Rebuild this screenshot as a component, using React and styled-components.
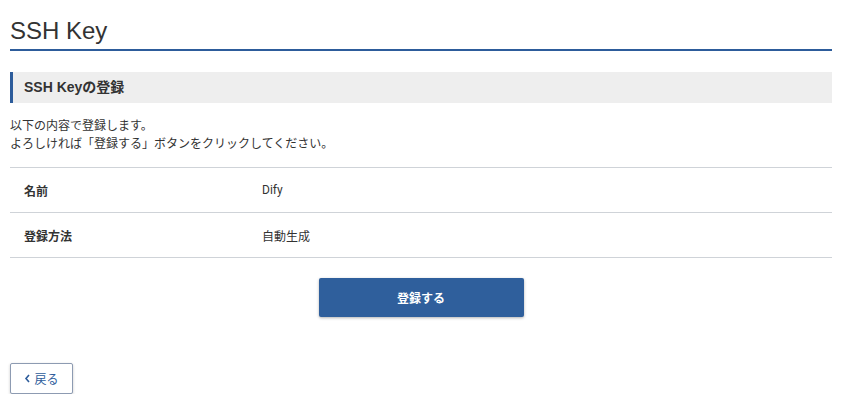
import React from "react";
import styled, { createGlobalStyle } from "styled-components";

const GlobalStyle = createGlobalStyle`
  body {
    margin: 0;
    background: #fff;
    font-family: Roboto, "Noto Sans CJK JP", sans-serif;
    color: #333;
  }
`;

const Page = styled.div`
  padding: 14px 12px 0 10px;
`;

const Title = styled.h1`
  margin: 0;
  font-family: "Liberation Sans", "Noto Sans CJK JP", sans-serif;
  font-size: 24px;
  font-weight: 400;
  line-height: 34px;
  color: #333;
  padding-bottom: 1px;
  border-bottom: 2px solid #2d5c9b;
`;

const SectionHeader = styled.h2`
  margin: 21px 0 0;
  background: #eeeeee;
  border-left: 3px solid #2d5c9b;
  font-family: "Liberation Sans", "Noto Sans CJK JP", sans-serif;
  font-size: 14px;
  font-weight: 700;
  line-height: 31px;
  padding-left: 11px;
  color: #333;
`;

const Lead = styled.p`
  margin: 14px 0 0;
  font-size: 12px;
  line-height: 18px;
  color: #333;
`;

const Table = styled.div`
  margin-top: 14px;
  border-top: 1px solid #cfd3d8;
`;

const Row = styled.div`
  display: grid;
  grid-template-columns: 252px 1fr;
  height: 44px;
  align-items: center;
  border-bottom: 1px solid #cfd3d8;
  font-size: 12px;
`;

const Label = styled.div`
  font-weight: 700;
  padding-left: 14px;
`;

const Value = styled.div``;

const Actions = styled.div`
  display: flex;
  justify-content: center;
  margin-top: 20px;
`;

const PrimaryButton = styled.button`
  width: 205px;
  height: 39px;
  border: none;
  border-radius: 2px;
  background: #2f5f9c;
  color: #fff;
  font-family: inherit;
  font-size: 12px;
  font-weight: 700;
  box-shadow: 0 1px 3px rgba(0, 0, 0, 0.3);
`;

const BackButton = styled.button`
  margin-top: 46px;
  display: flex;
  align-items: center;
  gap: 3px;
  width: 63px;
  height: 31px;
  justify-content: center;
  background: #fff;
  border: 1px solid #8d9bb2;
  border-radius: 2px;
  box-shadow: 0 1px 3px rgba(0, 0, 0, 0.2);
  font-family: inherit;
  font-size: 12px;
  color: #2d5c9b;
  padding: 0;
`;

const rows = [
  ["名前", "Dify"],
  ["登録方法", "自動生成"],
];

export default function App() {
  return (
    <>
      <GlobalStyle />
      <Page>
        <Title>SSH Key</Title>
        <SectionHeader>SSH Keyの登録</SectionHeader>
        <Lead>
          以下の内容で登録します。
          <br />
          よろしければ「登録する」ボタンをクリックしてください。
        </Lead>
        <Table>
          {rows.map(([k, v]) => (
            <Row key={k}>
              <Label>{k}</Label>
              <Value>{v}</Value>
            </Row>
          ))}
        </Table>
        <Actions>
          <PrimaryButton>登録する</PrimaryButton>
        </Actions>
        <BackButton>
          <svg width="7" height="9" viewBox="0 0 7 9">
            <path d="M5 1 L2 4.5 L5 8" fill="none" stroke="#2d5c9b" strokeWidth="1.6" />
          </svg>
          戻る
        </BackButton>
      </Page>
    </>
  );
}
